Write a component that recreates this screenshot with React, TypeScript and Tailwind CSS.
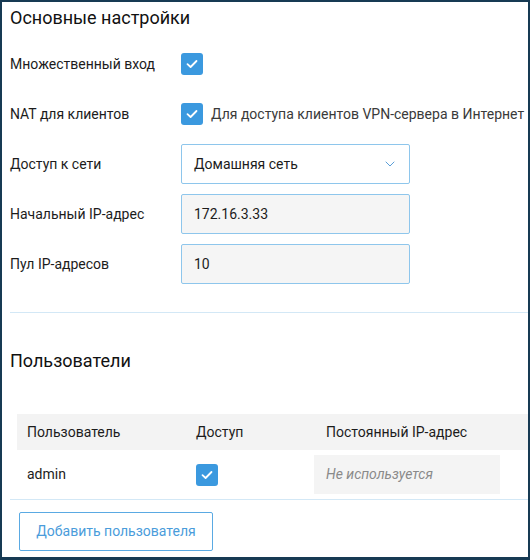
import { ChevronDown } from 'lucide-react';

function CheckBox() {
  return (
    <span className="flex h-[22px] w-[22px] items-center justify-center rounded-[3px] bg-[#3b99df]">
      <svg width="12" height="10" viewBox="0 0 12 10" fill="none">
        <path d="M1.5 5.2 L4.6 8 L10.5 2" stroke="white" strokeWidth="1.8" strokeLinecap="round" strokeLinejoin="round" />
      </svg>
    </span>
  );
}

function FormRow({ label, children }: { label: string; children: React.ReactNode }) {
  return (
    <div className="flex h-10 items-center">
      <div className="w-[171px] shrink-0 text-[14px] text-[#1c1c1c]">{label}</div>
      {children}
    </div>
  );
}

export default function App() {
  return (
    <div
      className="box-border h-[560px] w-[530px] overflow-hidden border-x-2 border-t-2 border-b-[3px] border-[#173a53] bg-white"
      style={{ fontFamily: 'Roboto, "Liberation Sans", sans-serif' }}
    >
      {/* Основные настройки */}
      <div className="pl-2 pt-1">
        <h1 className="text-[18px] leading-6 text-[#111]">Основные настройки</h1>
        <div className="mt-[14px] flex flex-col gap-[10px]">
          <FormRow label="Множественный вход">
            <CheckBox />
          </FormRow>
          <FormRow label="NAT для клиентов">
            <CheckBox />
            <span className="ml-2 whitespace-nowrap text-[14px] text-[#3a3a3a]">
              Для доступа клиентов VPN-сервера в Интернет
            </span>
          </FormRow>
          <FormRow label="Доступ к сети">
            <div className="flex h-10 w-[229px] items-center justify-between rounded-[2px] border border-[#8ec6ec] bg-white pl-3 pr-[11px]">
              <span className="text-[14px] text-[#1c1c1c]">Домашняя сеть</span>
              <ChevronDown size={16} strokeWidth={1.5} className="text-[#5b9fd8]" />
            </div>
          </FormRow>
          <FormRow label="Начальный IP-адрес">
            <div className="flex h-10 w-[229px] items-center rounded-[2px] border border-[#8ec6ec] bg-[#f5f5f5] pl-3 text-[14px] text-[#1c1c1c]">
              172.16.3.33
            </div>
          </FormRow>
          <FormRow label="Пул IP-адресов">
            <div className="flex h-10 w-[229px] items-center rounded-[2px] border border-[#8ec6ec] bg-[#f5f5f5] pl-3 text-[14px] text-[#1c1c1c]">
              10
            </div>
          </FormRow>
        </div>
        <div className="mt-7 h-px bg-[#d3e8f6]" />
      </div>

      {/* Пользователи */}
      <div className="pl-2">
        <h2 className="mt-9 text-[18px] leading-6 text-[#111]">Пользователи</h2>
        <div className="ml-[7px] mt-[41px] flex h-9 items-center bg-[#f3f3f3] pl-[10px] text-[14px] text-[#1c1c1c]">
          <span className="w-[169px]">Пользователь</span>
          <span className="w-[130px]">Доступ</span>
          <span>Постоянный IP-адрес</span>
        </div>
        <div className="flex h-[50px] items-center border-b border-[#d3e8f6] pl-[17px] text-[14px] text-[#1c1c1c]">
          <span className="w-[169px]">admin</span>
          <span className="w-[118px]">
            <CheckBox />
          </span>
          <div className="flex h-[39px] w-[186px] items-center bg-[#f4f4f4] pl-3 text-[14px] italic text-[#8a8a8a]">
            Не используется
          </div>
        </div>
        <button className="ml-[9px] mt-3 h-[39px] w-[194px] rounded-[2px] border border-[#5aaae3] bg-white text-[14px] text-[#4a9cdb]">
          Добавить пользователя
        </button>
      </div>
    </div>
  );
}
